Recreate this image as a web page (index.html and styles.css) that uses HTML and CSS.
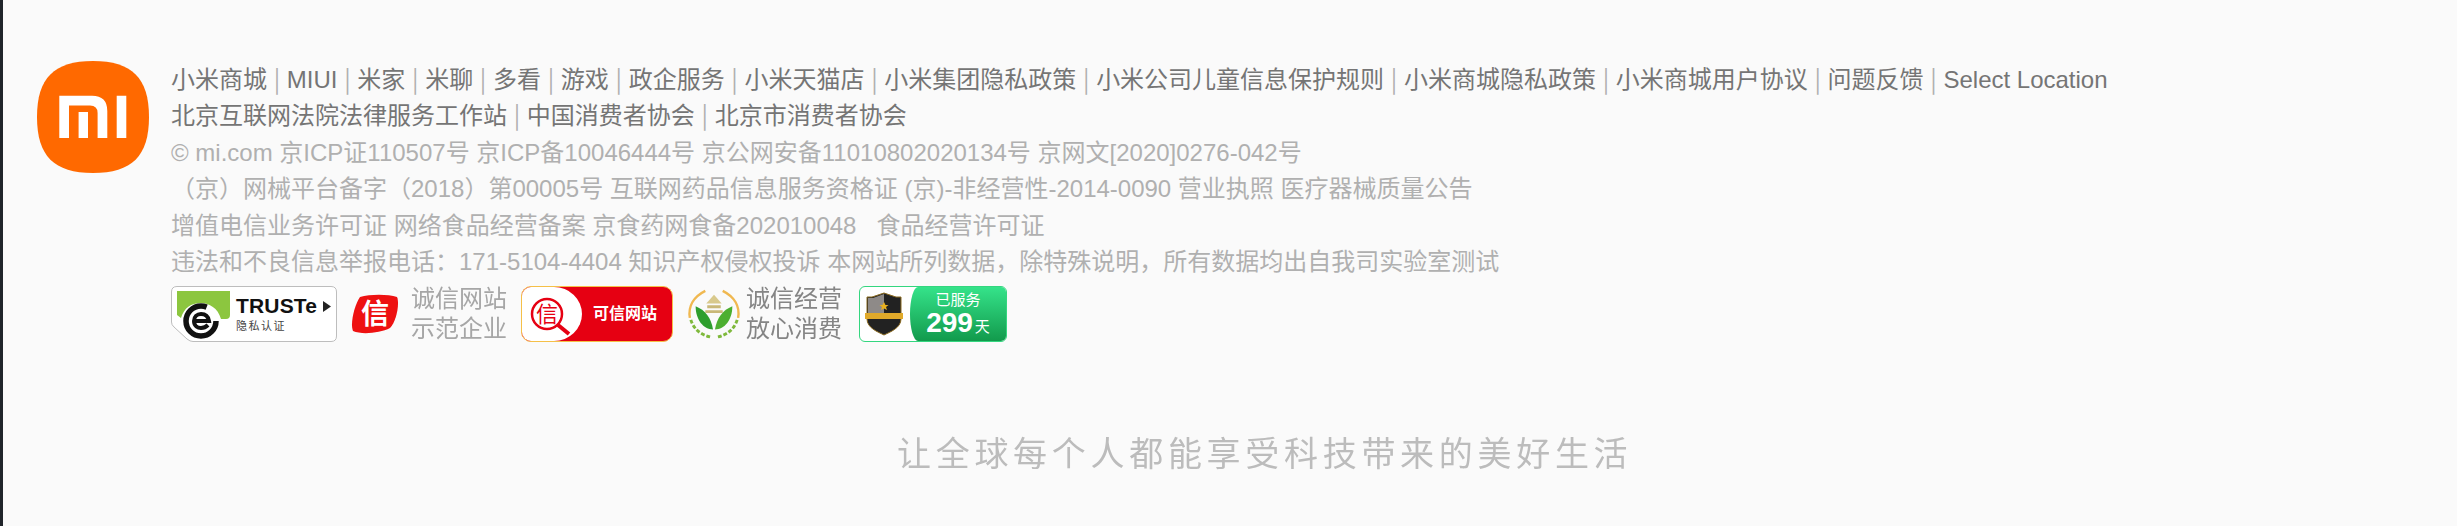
FILE: index.html
```html
<!DOCTYPE html>
<html lang="zh-CN">
<head>
  <meta charset="UTF-8" />
  <title>小米商城</title>
  <link rel="stylesheet" href="styles.css">
</head>
<body>
  <div class="footer">
    <svg class="logo" viewBox="0 0 112 112" width="112" height="112">
      <path fill="#ff6900" d="M56 0C95 0 112 17 112 56C112 95 95 112 56 112C17 112 0 95 0 56C0 17 17 0 56 0Z"/>
      <path fill="#fff" d="M22.3 34.7H55Q70.3 34.7 70.3 50V77H60.6V52Q60.6 44.5 53 44.5H32V77H22.3Z"/>
      <path fill="#fff" d="M41.6 51H51V77H41.6ZM79.7 34.7H89.3V77H79.7Z"/>
    </svg>
    <div class="info">
      <div class="links">
        <a href="#">小米商城</a> <span class="sep">|</span>
        <a href="#">MIUI</a> <span class="sep">|</span>
        <a href="#">米家</a> <span class="sep">|</span>
        <a href="#">米聊</a> <span class="sep">|</span>
        <a href="#">多看</a> <span class="sep">|</span>
        <a href="#">游戏</a> <span class="sep">|</span>
        <a href="#">政企服务</a> <span class="sep">|</span>
        <a href="#">小米天猫店</a> <span class="sep">|</span>
        <a href="#">小米集团隐私政策</a> <span class="sep">|</span>
        <a href="#">小米公司儿童信息保护规则</a> <span class="sep">|</span>
        <a href="#">小米商城隐私政策</a> <span class="sep">|</span>
        <a href="#">小米商城用户协议</a> <span class="sep">|</span>
        <a href="#">问题反馈</a> <span class="sep">|</span>
        <a href="#">Select Location</a>
      </div>
      <div class="links">
        <a href="#">北京互联网法院法律服务工作站</a> <span class="sep">|</span>
        <a href="#">中国消费者协会</a> <span class="sep">|</span>
        <a href="#">北京市消费者协会</a>
      </div>
      <div class="legal">© mi.com 京ICP证110507号 京ICP备10046444号 京公网安备11010802020134号 京网文[2020]0276-042号</div>
      <div class="legal">（京）网械平台备字（2018）第00005号 互联网药品信息服务资格证 (京)-非经营性-2014-0090 营业执照 医疗器械质量公告</div>
      <div class="legal">增值电信业务许可证 网络食品经营备案 京食药网食备202010048 &nbsp; 食品经营许可证</div>
      <div class="legal">违法和不良信息举报电话：171-5104-4404 知识产权侵权投诉 本网站所列数据，除特殊说明，所有数据均出自我司实验室测试</div>

      <div class="badges">
        <svg class="badge" viewBox="0 0 166 56" width="166" height="56">
          <path fill="#fff" stroke="#bdbdbd" d="M6 .5H160Q165.500 .5 165.500 6V50Q165.500 55.500 160 55.500H22Q19 55.500 16 53L3 41Q.5 39 .5 36V6Q.5 .5 6 .5Z"/>
          <path fill="#8cc63f" d="M6 5H59V29Q59 33 55 33H50C47 22 38 17 30 17C20 17 13 22 10 32L6 29Z"/>
          <circle cx="30" cy="35" r="15" fill="#fff" stroke="#111" stroke-width="5.500" stroke-dasharray="76 18"/>
          <path fill="none" stroke="#111" stroke-width="4" d="M23 35H38C37 29 33 28 30 28C26 28 23 31 23 35C23 40 27 42 30 42C33 42 35 41 37 39"/>
          <text x="65" y="27" textLength="81" class="truste-name">TRUSTe</text>
          <path fill="#222" d="M152 15L160 20.500L152 26Z"/>
          <text x="65" y="44" class="truste-sub">隐私认证</text>
        </svg>

        <div class="badge-pair">
          <svg viewBox="0 0 50 40" width="50" height="40">
            <path fill="#ee1111" d="M10 3C20 0 38 0 47 3C50 10 46 28 40 34C30 39 12 41 3 37C0 30 4 12 10 3Z"/>
            <text x="25" y="30" class="xin">信</text>
          </svg>
          <div class="pair-text"><span>诚信网站</span><span>示范企业</span></div>
        </div>

        <div class="trusted">
          <svg class="trusted-icon" viewBox="0 0 60 54" width="60" height="54">
            <circle cx="25" cy="27" r="15" fill="none" stroke="#e60012" stroke-width="2.500"/>
            <path stroke="#e60012" stroke-width="4" d="M36 38L47 47"/>
            <text x="25" y="35" class="xin-red">信</text>
          </svg>
          <span class="trusted-text">可信网站</span>
        </div>

        <div class="badge-pair badge-pair-green">
          <svg viewBox="0 0 58 56" width="58" height="56">
            <path fill="none" stroke="#f0b850" stroke-width="2.500" d="M20 4C8 10 2 20 4 32"/>
            <path fill="none" stroke="#f0b850" stroke-width="2.500" d="M38 4C50 10 56 20 54 32"/>
            <path fill="none" stroke="#7fb93c" stroke-width="3" stroke-dasharray="4 2" d="M5 34C8 44 16 50 26 52M53 34C50 44 42 50 32 52"/>
            <path fill="#d8c98c" d="M29 8L37 17H21Z"/>
            <path fill="#c9b878" d="M22 19H36V22H22ZM20 24H38V27H20Z"/>
            <path fill="#2e9e2e" d="M10 20C20 24 26 32 28 44C18 44 10 34 10 20Z"/>
            <path fill="#4caf30" d="M48 20C38 24 32 32 30 44C40 44 48 34 48 20Z"/>
          </svg>
          <div class="pair-text"><span>诚信经营</span><span>放心消费</span></div>
        </div>

        <div class="served">
          <svg class="shield" viewBox="0 0 48 56" width="48" height="56">
            <path fill="#222" stroke="#8a6a20" d="M24 7L36 11L41 11V33C41 42 30 46 24 49C18 46 7 42 7 33V11L12 11Z"/>
            <path fill="#8e8a88" d="M24 8V29H8V12L13 12Z"/>
            <path fill="#e0a92a" d="M5 27H43V33H5Z"/>
            <path fill="#e8b020" d="M24 16L25.500 19H28.500L26 21L27 24L24 22.500L21 24L22 21L19.500 19H22.500L24 16Z"/>
          </svg>
          <div class="served-panel">
            <span class="served-label">已服务</span>
            <span class="served-days"><b>299</b>天</span>
          </div>
        </div>
      </div>
    </div>
  </div>
  <div class="slogan">让全球每个人都能享受科技带来的美好生活</div>
</body>
</html>
```

FILE: styles.css
```css
html, body {
  margin: 0;
  padding: 0;
  height: 100%;
}

body {
  box-sizing: border-box;
  height: 526px;
  overflow: hidden;
  border-left: 3px solid #20242a;
  background-color: #fafafa;
  font-family: "Liberation Sans", "Noto Sans CJK SC", sans-serif;
}

.footer {
  display: flex;
  align-items: flex-start;
  gap: 22px;
  padding: 61px 0 0 34px;
}

.logo {
  flex: none;
}

.info {
  padding-top: 1px;
  font-size: 24px;
  line-height: 36.4px;
  white-space: nowrap;
}

.links a {
  color: #757575;
  text-decoration: none;
}

.sep {
  font-family: "Noto Sans CJK SC", sans-serif;
  line-height: 0;
  color: #b0b0b0;
}

.legal {
  color: #b0b0b0;
}

.badges {
  display: flex;
  align-items: flex-start;
  gap: 13px;
  margin-top: 6px;
}

.badge {
  display: block;
}

.truste-name {
  font: bold 21px "Liberation Sans", sans-serif;
  fill: #111;
}

.truste-sub {
  font: 11px "Noto Sans CJK SC", sans-serif;
  letter-spacing: 1.500px;
  fill: #444;
}

.badge-pair {
  display: flex;
  align-items: center;
  gap: 11px;
  width: 158px;
  height: 56px;
}

.badge-pair-green {
  gap: 4px;
  width: 156px;
}

.pair-text {
  display: flex;
  flex-direction: column;
  font-size: 24px;
  line-height: 30px;
  color: #a6a6a6;
  filter: blur(0.6px);
}

.badge-pair-green .pair-text {
  color: #858585;
}

.xin {
  font: bold 28px "Noto Sans CJK SC", sans-serif;
  text-anchor: middle;
  fill: #fff;
}

.xin-red {
  font: 22px "Noto Sans CJK SC", sans-serif;
  text-anchor: middle;
  fill: #e60012;
}

.trusted {
  box-sizing: border-box;
  display: flex;
  align-items: center;
  width: 152px;
  height: 56px;
  border: 1px solid #f5c048;
  border-radius: 10px;
  background-color: #e60012;
  overflow: hidden;
}

.trusted-icon {
  flex: none;
  width: 60px;
  background-color: #fff;
  border-radius: 0 28px 28px 0 / 0 50% 50% 0;
}

.trusted-text {
  margin-left: 11px;
  font-size: 16px;
  font-weight: bold;
  color: #fff;
}

.served {
  box-sizing: border-box;
  display: flex;
  margin-left: 4px;
  width: 148px;
  height: 56px;
  border: 1px solid #34d67f;
  border-radius: 6px;
  background-color: #fff;
  overflow: hidden;
}

.shield {
  flex: none;
  margin-top: -1px;
}

.served-panel {
  flex: 1;
  display: flex;
  flex-direction: column;
  align-items: center;
  margin-left: 2px;
  padding-top: 4px;
  border-radius: 8px 0 0 8px / 50% 0 0 50%;
  background: linear-gradient(#35e38a, #129a4c);
  color: #fff;
}

.served-label {
  font-size: 15px;
  line-height: 18px;
}

.served-days {
  font-size: 15px;
  line-height: 28px;
}

.served-days b {
  font-size: 28px;
  margin-right: 2px;
}

.slogan {
  height: 34px;
  margin: 94px 0 0 894px;
  overflow: hidden;
  font-size: 34px;
  line-height: 37px;
  letter-spacing: 4.700px;
  white-space: nowrap;
  color: #bcbcbc;
  filter: blur(0.6px);
}
```
